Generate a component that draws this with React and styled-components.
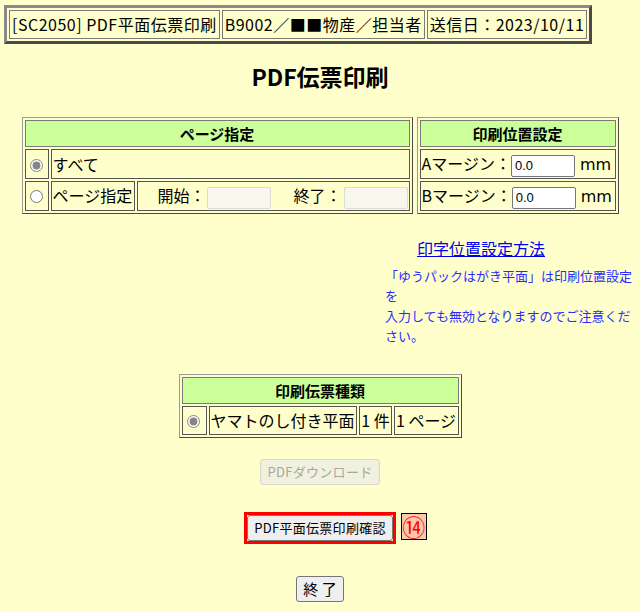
import React from "react";
import styled, { createGlobalStyle } from "styled-components";

const GlobalStyle = createGlobalStyle`
  html, body {
    margin: 0;
    padding: 0;
    background-color: #ffffcc;
  }
  body {
    font-family: "Noto Sans CJK JP", "DejaVu Sans", sans-serif;
    color: #000;
  }
`;

const Page = styled.div`
  padding: 5px 4px 8px 4px;
  display: flex;
  flex-direction: column;
`;

const HeaderTable = styled.table`
  border-collapse: separate;
  border-spacing: 2px;
  border: 3px solid;
  border-color: #8a8a8a #4a4a4a #4a4a4a #8a8a8a;
  align-self: flex-start;
`;

const HeaderCell = styled.td`
  border: 1px solid #7a7a7a;
  padding: 1px 2px;
  font-size: 16px;
  letter-spacing: 0.5px;
  line-height: 25px;
  white-space: nowrap;
`;

const Title = styled.h1`
  margin: 16px 0 0 0;
  text-align: center;
  font-size: 23px;
  font-weight: bold;
  line-height: 32px;
`;

const TableRow = styled.div`
  display: flex;
  justify-content: center;
  gap: 4px;
  margin-top: ${(p) => p.$top || 0}px;
`;

const Grid = styled.table`
  border-collapse: separate;
  border-spacing: 2px;
  border: 1px solid;
  border-color: #9a9a9a #4a4a4a #4a4a4a #9a9a9a;
  width: ${(p) => p.$w}px;
`;

const Th = styled.th`
  background-color: #ccff99;
  border: 1px solid #7a7a7a;
  font-size: 15px;
  font-weight: bold;
  line-height: 23px;
  padding: 1px;
  text-align: center;
`;

const Td = styled.td`
  border: 1px solid #555;
  font-size: 16px;
  line-height: 25px;
  padding: 1px;
  white-space: nowrap;
  text-align: ${(p) => p.$align || "left"};
  width: ${(p) => (p.$w ? `${p.$w}px` : "auto")};
`;

const Radio = styled.input.attrs({ type: "radio" })`
  margin: 0 2px 0 3px;
  width: 13px;
  height: 13px;
  vertical-align: -1px;
  accent-color: #858585;
`;

const Label = styled.span`
  display: inline-block;
  margin: 0 2px 0 ${(p) => p.$left || 0}px;
`;

const TextInput = styled.input`
  width: 64px;
  height: 22px;
  box-sizing: border-box;
  font-family: "Liberation Sans", sans-serif;
  font-size: 13px;
  padding: 1px 3px;
  vertical-align: middle;
  border-radius: 2px;
  border: 1px solid ${(p) => (p.disabled ? "#dcdcd0" : "#767676")};
  background-color: ${(p) => (p.disabled ? "#f7f7ee" : "#fff")};
  color: #000;
`;

const Unit = styled.span`
  font-family: "DejaVu Sans", sans-serif;
  font-size: 16px;
  margin-left: 5px;
`;

const NoteWrap = styled.div`
  display: flex;
  justify-content: flex-end;
  padding-right: 1px;
  margin-top: 23px;
`;

const Note = styled.div`
  width: 250px;
  color: #2b2bff;
  font-size: 13px;
  line-height: 20px;
`;

const HowTo = styled.a`
  display: block;
  margin: 0 0 7px 32px;
  font-size: 16px;
  line-height: 22px;
  color: #0000ee;
  text-decoration: underline;
  cursor: pointer;
`;

const Center = styled.div`
  display: flex;
  justify-content: center;
  align-items: center;
  margin-top: ${(p) => p.$top}px;
`;

const Button = styled.button`
  font-family: "Noto Sans CJK JP", sans-serif;
  font-size: ${(p) => p.$size || 13}px;
  letter-spacing: ${(p) => (p.$size ? 0 : 0.3)}px;
  line-height: 18px;
  padding: 3px 6px;
  border-radius: 3px;
  border: 1px solid ${(p) => (p.disabled ? "#d6d6c4" : "#767676")};
  background-color: ${(p) => (p.disabled ? "#f1f1e0" : "#efefef")};
  color: ${(p) => (p.disabled ? "#a8a8a0" : "#000")};
`;

const Marked = styled.div`
  position: relative;
  display: flex;
`;

const RedFrame = styled.div`
  border: 3px solid #ff0000;
  display: flex;
`;

const Badge = styled.span`
  position: absolute;
  left: calc(100% + 5px);
  top: 1px;
  display: inline-flex;
  align-items: center;
  justify-content: center;
  width: 24px;
  height: 25px;
  border: 1px solid #000;
  background-color: #f9c9a9;
  color: #ff0000;
  font-size: 23px;
  line-height: 1;
  font-family: "Noto Sans CJK JP", sans-serif;
`;

const App = () => {
  return (
    <>
      <GlobalStyle />
      <Page>
        <HeaderTable>
          <tbody>
            <tr>
              <HeaderCell>[SC2050] PDF平面伝票印刷</HeaderCell>
              <HeaderCell>B9002／■■物産／担当者</HeaderCell>
              <HeaderCell>送信日：2023/10/11</HeaderCell>
            </tr>
          </tbody>
        </HeaderTable>

        <Title>PDF伝票印刷</Title>

        <TableRow $top={25}>
          <Grid $w={391}>
            <tbody>
              <tr>
                <Th colSpan={3}>ページ指定</Th>
              </tr>
              <tr>
                <Td $w={22}>
                  <Radio name="page" defaultChecked />
                </Td>
                <Td colSpan={2}>すべて</Td>
              </tr>
              <tr>
                <Td>
                  <Radio name="page" />
                </Td>
                <Td $w={82}>ページ指定</Td>
                <Td>
                  <Label $left={18}>開始：</Label>
                  <TextInput disabled />
                  <Label $left={22}>終了：</Label>
                  <TextInput disabled />
                </Td>
              </tr>
            </tbody>
          </Grid>

          <Grid $w={202}>
            <tbody>
              <tr>
                <Th>印刷位置設定</Th>
              </tr>
              <tr>
                <Td>
                  Aマージン：
                  <TextInput defaultValue="0.0" />
                  <Unit>mm</Unit>
                </Td>
              </tr>
              <tr>
                <Td>
                  Bマージン：
                  <TextInput defaultValue="0.0" />
                  <Unit>mm</Unit>
                </Td>
              </tr>
            </tbody>
          </Grid>
        </TableRow>

        <NoteWrap>
          <Note>
            <HowTo>印字位置設定方法</HowTo>
            「ゆうパックはがき平面」は印刷位置設定を
            <br />
            入力しても無効となりますのでご注意ください。
          </Note>
        </NoteWrap>

        <TableRow $top={28}>
          <Grid $w={283}>
            <tbody>
              <tr>
                <Th colSpan={4}>印刷伝票種類</Th>
              </tr>
              <tr>
                <Td $w={21}>
                  <Radio name="kind" defaultChecked />
                </Td>
                <Td>ヤマトのし付き平面</Td>
                <Td>1 件</Td>
                <Td>1 ページ</Td>
              </tr>
            </tbody>
          </Grid>
        </TableRow>

        <Center $top={21}>
          <Button disabled>PDFダウンロード</Button>
        </Center>

        <Center $top={27}>
          <Marked>
            <RedFrame>
              <Button>PDF平面伝票印刷確認</Button>
            </RedFrame>
            <Badge>⑭</Badge>
          </Marked>
        </Center>

        <Center $top={32}>
          <Button $size={15}>終 了</Button>
        </Center>
      </Page>
    </>
  );
};

export default App;
